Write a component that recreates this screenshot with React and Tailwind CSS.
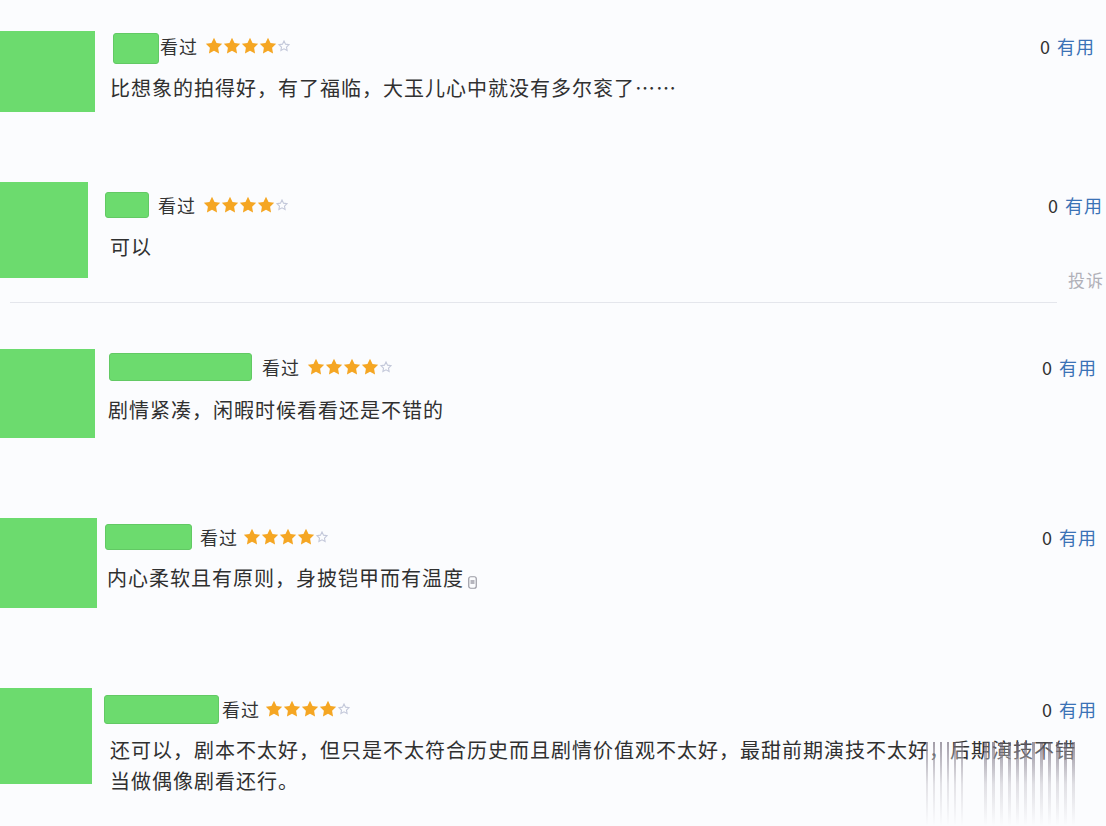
import React from "react";

const STAR = "M12 2l3.09 6.26L22 9.27l-5 4.87 1.18 6.88L12 17.77l-6.18 3.25L7 14.14 2 9.27l6.91-1.01L12 2z";

function Stars({ cls }) {
  return (
    <div className={"flex items-center " + cls}>
      {[0, 1, 2, 3].map((i) => (
        <svg key={i} width="18" height="18" viewBox="1 1 22 22">
          <path d={STAR} fill="#f5a623" />
        </svg>
      ))}
      <svg width="12" height="12" viewBox="0 0 24 24" className="ml-[1px]">
        <path d={STAR} fill="none" stroke="#c3c8da" strokeWidth="2.2" />
      </svg>
    </div>
  );
}

function Useful({ cls }) {
  return (
    <div className={"ml-auto flex items-center gap-[7px] text-[18px] " + (cls || "")}>
      <span className="text-[#333]">0</span>
      <span className="text-[#3b72b6] tracking-[1px]">有用</span>
    </div>
  );
}

const Seen = ({ cls }) => (
  <span className={"text-[18px] text-[#333] tracking-[1px] " + cls}>看过</span>
);

export default function App() {
  return (
    <div className="relative w-[1106px] h-[826px] overflow-hidden bg-[#fbfcfe] font-['Noto_Sans_CJK_SC',sans-serif] text-[#303030]">
      {/* Row 1 */}
      <div className="flex pt-[31px]">
        <div className="w-[95px] h-[81px] shrink-0 bg-[#6cdb6e]" />
        <div className="flex-1 ml-[15px] pr-[11px]">
          <div className="flex items-center h-[30px]">
            <div className="w-[46px] h-[31px] mt-[5px] ml-[3px] rounded-[3px] bg-[#6cdb6e] border border-[#62c964]" />
            <Seen cls="ml-[1px]" />
            <Stars cls="ml-[7px]" />
            <Useful />
          </div>
          <div className="mt-[13px] text-[20px] leading-[28px] tracking-[1px] whitespace-nowrap">
            比想象的拍得好，有了福临，大玉儿心中就没有多尔衮了……
          </div>
        </div>
      </div>

      {/* Row 2 */}
      <div className="flex mt-[70px]">
        <div className="w-[88px] h-[96px] shrink-0 bg-[#6cdb6e]" />
        <div className="flex-1 ml-[17px] pr-[3px] mt-[8px]">
          <div className="flex items-center h-[30px]">
            <div className="w-[44px] h-[26px] rounded-[3px] bg-[#6cdb6e] border border-[#62c964]" />
            <Seen cls="ml-[9px]" />
            <Stars cls="ml-[7px]" />
            <Useful />
          </div>
          <div className="mt-[13px] ml-[5px] text-[20px] leading-[28px] tracking-[1px]">可以</div>
          <div className="mt-[7px] flex justify-end">
            <span className="text-[17px] leading-[24px] text-[#b0b0b8] tracking-[1px] mr-[-1px]">投诉</span>
          </div>
        </div>
      </div>
      <div className="ml-[10px] mt-[10px] w-[1047px] h-px bg-[#e4e6ec]" />

      {/* Row 3 */}
      <div className="flex mt-[46px]">
        <div className="w-[95px] h-[89px] shrink-0 bg-[#6cdb6e]" />
        <div className="flex-1 ml-[13px] pr-[9px] mt-[3px]">
          <div className="flex items-center h-[30px]">
            <div className="w-[143px] h-[28px] ml-[1px] rounded-[3px] bg-[#6cdb6e] border border-[#62c964]" />
            <Seen cls="ml-[10px]" />
            <Stars cls="ml-[7px]" />
            <Useful />
          </div>
          <div className="mt-[14px] text-[20px] leading-[28px] tracking-[1px] whitespace-nowrap">
            剧情紧凑，闲暇时候看看还是不错的
          </div>
        </div>
      </div>

      {/* Row 4 */}
      <div className="flex mt-[80px]">
        <div className="w-[97px] h-[90px] shrink-0 bg-[#6cdb6e]" />
        <div className="flex-1 ml-[8px] pr-[9px] mt-[4px]">
          <div className="flex items-center h-[30px]">
            <div className="w-[87px] h-[26px] rounded-[3px] bg-[#6cdb6e] border border-[#62c964]" />
            <Seen cls="ml-[8px]" />
            <Stars cls="ml-[5px]" />
            <Useful />
          </div>
          <div className="mt-[12px] ml-[2px] flex items-center text-[20px] leading-[28px] tracking-[1px] whitespace-nowrap">
            <span>内心柔软且有原则，身披铠甲而有温度</span>
            <svg width="9" height="13" viewBox="0 0 9 13" className="ml-[4px] mt-[8px]">
              <rect x="0.75" y="0.75" width="7.5" height="11.5" rx="2" fill="none" stroke="#9a9aa4" strokeWidth="1.2" />
              <rect x="2.5" y="4" width="4" height="4" fill="#b5b5bd" />
            </svg>
          </div>
        </div>
      </div>

      {/* Row 5 */}
      <div className="flex mt-[80px]">
        <div className="w-[92px] h-[96px] shrink-0 bg-[#6cdb6e]" />
        <div className="flex-1 ml-[12px] pr-[9px] mt-[6px]">
          <div className="flex items-center h-[30px]">
            <div className="w-[115px] h-[29px] rounded-[3px] bg-[#6cdb6e] border border-[#62c964]" />
            <Seen cls="ml-[3px]" />
            <Stars cls="ml-[5px]" />
            <Useful />
          </div>
          <div className="mt-[10px] ml-[6px] text-[20px] leading-[31px] tracking-[1px] whitespace-nowrap">
            <div>还可以，剧本不太好，但只是不太符合历史而且剧情价值观不太好，最甜前期演技不太好，后期演技不错</div>
            <div>当做偶像剧看还行。</div>
          </div>
        </div>
      </div>

      {/* smeared streak artifact */}
      <div className="absolute left-[926px] top-[742px] w-[38px] h-[84px] bg-[repeating-linear-gradient(90deg,rgba(70,60,80,0.55)_0px,rgba(70,60,80,0.55)_2px,rgba(255,255,255,0)_2px,rgba(255,255,255,0)_7px)]">
        <div className="w-full h-full bg-gradient-to-b from-[rgba(251,252,254,0.1)] via-[rgba(251,252,254,0.75)] to-[#fbfcfe]" />
      </div>
      <div className="absolute left-[984px] top-[742px] w-[92px] h-[84px] bg-[repeating-linear-gradient(90deg,rgba(70,60,80,0.6)_0px,rgba(70,60,80,0.6)_3px,rgba(255,255,255,0)_3px,rgba(255,255,255,0)_8px)]">
        <div className="w-full h-full bg-gradient-to-b from-[rgba(251,252,254,0.1)] via-[rgba(251,252,254,0.75)] to-[#fbfcfe]" />
      </div>
    </div>
  );
}
